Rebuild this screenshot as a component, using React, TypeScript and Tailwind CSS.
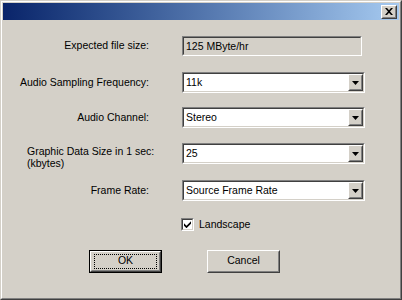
import type { ReactNode } from "react";

const font = { fontFamily: '"Liberation Sans", Arial, sans-serif' };

function Sunken({ children, className }: { children: ReactNode; className: string }) {
  return (
    <div className={`border border-t-[#808080] border-l-[#808080] border-r-white border-b-white ${className}`}>
      <div className="h-full border border-t-[#404040] border-l-[#404040] border-r-[#d4d0c8] border-b-[#d4d0c8]">
        {children}
      </div>
    </div>
  );
}

function Raised({ children, className }: { children: ReactNode; className: string }) {
  return (
    <div className={`border border-t-white border-l-white border-r-[#404040] border-b-[#404040] bg-[#d4d0c8] ${className}`}>
      <div className="h-full border border-t-[#d4d0c8] border-l-[#d4d0c8] border-r-[#808080] border-b-[#808080] flex items-center justify-center">
        {children}
      </div>
    </div>
  );
}

function Combo({ value }: { value: string }) {
  return (
    <Sunken className="w-[183px] h-[21px]">
      <div className="flex h-full bg-white">
        <div className="flex-1 pl-[2px] leading-[17px]">{value}</div>
        <Raised className="w-[15px] h-[17px]">
          <svg width="7" height="4" viewBox="0 0 7 4">
            <path d="M0 0h7L3.5 4z" fill="#000" />
          </svg>
        </Raised>
      </div>
    </Sunken>
  );
}

function Row({ label, children, className }: { label: ReactNode; children: ReactNode; className: string }) {
  return (
    <div className={`flex items-center ${className}`}>
      <div className="w-[146px] shrink-0 text-right whitespace-nowrap">{label}</div>
      <div className="ml-[33px]">{children}</div>
    </div>
  );
}

export default function App() {
  return (
    <div className="w-[402px] h-[300px] bg-[#d4d0c8] text-[10.5px] text-black" style={font}>
      <div className="h-full border border-t-[#d4d0c8] border-l-[#d4d0c8] border-r-[#404040] border-b-[#404040]">
        <div className="h-full border border-t-white border-l-white border-r-[#808080] border-b-[#808080] px-px pt-px">
          <div className="h-[17px] flex items-center justify-end pr-[2px] bg-gradient-to-r from-[#0a246a] to-[#a6caf0]">
            <Raised className="w-[16px] h-[14px]">
              <svg width="8" height="7" viewBox="0 0 8 7">
                <path d="M0 0h2l2 2.3L6 0h2L5 3.5 8 7H6L4 4.7 2 7H0l3-3.5z" fill="#000" />
              </svg>
            </Raised>
          </div>

          <Row label="Expected file size:" className="mt-[16px]">
            <Sunken className="w-[180px] h-[20px]">
              <div className="pl-[2px] leading-[16px]">125 MByte/hr</div>
            </Sunken>
          </Row>

          <Row label="Audio Sampling Frequency:" className="mt-[16px]">
            <Combo value="11k" />
          </Row>

          <Row label="Audio Channel:" className="mt-[14px]">
            <Combo value="Stereo" />
          </Row>

          <div className="flex items-start h-[21px] mt-[15px]">
            <div className="w-[146px] shrink-0 pl-[24px] pt-[2px] leading-[12px] whitespace-nowrap">
              Graphic Data Size in 1 sec:
              <br />
              (kbytes)
            </div>
            <div className="ml-[33px]">
              <Combo value="25" />
            </div>
          </div>

          <Row label="Frame Rate:" className="mt-[16px]">
            <Combo value="Source Frame Rate" />
          </Row>

          <div className="flex items-center mt-[16px] ml-[178px]">
            <Sunken className="w-[13px] h-[13px]">
              <div className="h-full bg-white flex items-center justify-center">
                <svg width="7" height="7" viewBox="0 0 7 7">
                  <path d="M0 2.3l2.5 2.5L7 0.3v2.4L2.5 7.2 0 4.7z" fill="#000" />
                </svg>
              </div>
            </Sunken>
            <span className="ml-[5px]">Landscape</span>
          </div>

          <div className="flex mt-[17px] ml-[86px]">
            <div className="border border-black">
              <Raised className="w-[71px] h-[21px]">
                <div className="w-[63px] h-[15px] border border-dotted border-black flex items-center justify-center">
                  OK
                </div>
              </Raised>
            </div>
            <Raised className="w-[73px] h-[23px] ml-[45px]">Cancel</Raised>
          </div>
        </div>
      </div>
    </div>
  );
}
